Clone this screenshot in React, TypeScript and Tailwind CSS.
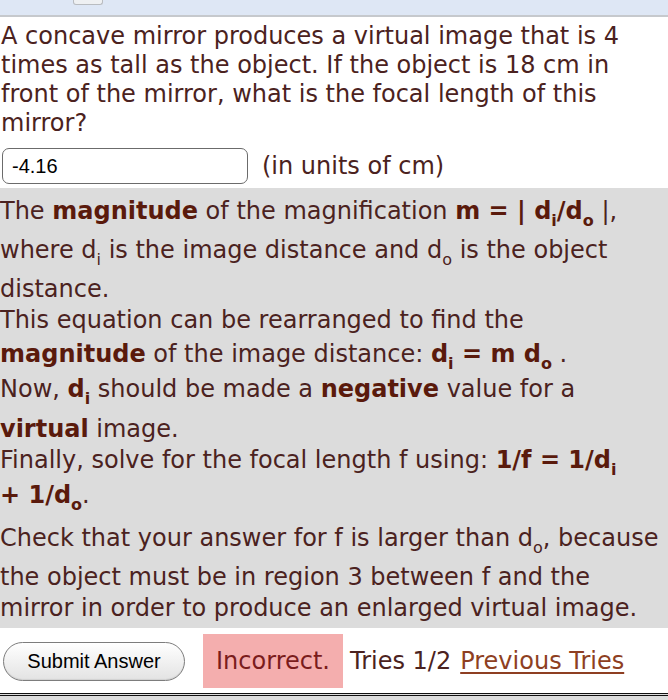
import React from "react";

const font = { fontFamily: '"DejaVu Sans", Verdana, sans-serif' };

function Sub({ children }: { children: React.ReactNode }) {
  return <span className="relative top-[7px] text-[16px] leading-none">{children}</span>;
}

function B({ children }: { children: React.ReactNode }) {
  return <b className="font-bold text-[#5a1a0c]">{children}</b>;
}

const lines: { mt: string; body: React.ReactNode }[] = [
  {
    mt: "mt-0",
    body: (
      <>
        The <B>magnitude</B> of the magnification <B>m = | d<Sub>i</Sub>/d<Sub>o</Sub></B> |,
      </>
    ),
  },
  {
    mt: "mt-[8px]",
    body: (
      <>
        where d<Sub>i</Sub> is the image distance and d<Sub>o</Sub> is the object
      </>
    ),
  },
  { mt: "mt-[8px]", body: <>distance.</> },
  { mt: "mt-0", body: <>This equation can be rearranged to find the</> },
  {
    mt: "mt-[3px]",
    body: (
      <>
        <B>magnitude</B> of the image distance: <B>d<Sub>i</Sub> = m d<Sub>o</Sub></B> .
      </>
    ),
  },
  {
    mt: "mt-[4px]",
    body: (
      <>
        Now, <B>d<Sub>i</Sub></B> should be made a <B>negative</B> value for a
      </>
    ),
  },
  {
    mt: "mt-[9px]",
    body: (
      <>
        <B>virtual</B> image.
      </>
    ),
  },
  {
    mt: "mt-0",
    body: (
      <>
        Finally, solve for the focal length f using: <B>1/f = 1/d<Sub>i</Sub></B>
      </>
    ),
  },
  {
    mt: "mt-[4px]",
    body: (
      <>
        <B>+ 1/d<Sub>o</Sub></B>.
      </>
    ),
  },
  {
    mt: "mt-[12px]",
    body: (
      <>
        Check that your answer for f is larger than d<Sub>o</Sub>, because
      </>
    ),
  },
  { mt: "mt-[8px]", body: <>the object must be in region 3 between f and the</> },
  { mt: "mt-0", body: <>mirror in order to produce an enlarged virtual image.</> },
];

export default function App() {
  return (
    <div className="w-[668px] h-[700px] overflow-hidden bg-white text-[#4b2220]" style={font}>
      <div className="relative h-[17px] bg-[#dee7f5] border-b-2 border-[#c6c9cd]">
        <div className="absolute left-[73px] top-0 w-[30px] h-[5px] rounded-b-[3px] border border-t-0 border-[#b9bcc0] bg-[#eef0f2]" />
      </div>

      <div className="pt-[5px] pl-[1px] text-[24px] leading-[29px] whitespace-nowrap">
        <div>A concave mirror produces a virtual image that is 4</div>
        <div>times as tall as the object. If the object is 18 cm in</div>
        <div>front of the mirror, what is the focal length of this</div>
        <div>mirror?</div>
      </div>

      <div className="mt-[10px] flex items-center">
        <div
          className="ml-[2px] w-[246px] h-[36px] rounded-[7px] border border-[#6b6b6b] bg-white flex items-center pl-[9px] text-[20px] text-black"
          style={{ fontFamily: '"Liberation Sans", Arial, sans-serif' }}
        >
          -4.16
        </div>
        <span className="ml-[14px] text-[24px] leading-[29px]">(in units of cm)</span>
      </div>

      <div className="mt-[4px] bg-[#dcdcdc] pt-[8px] pb-[4px] text-[24px] whitespace-nowrap">
        {lines.map((l, i) => (
          <div key={i} className={`${l.mt} h-[31px] leading-[31px]`}>
            {l.body}
          </div>
        ))}
      </div>

      <div className="flex items-center h-[65px] pt-[1px]">
        <button
          className="ml-[3px] w-[182px] h-[39px] rounded-full border border-[#7d7d7d] bg-gradient-to-b from-white to-[#e3e3e3] text-[20px] text-black shadow-[inset_0_-1px_1px_rgba(0,0,0,0.08)]"
          style={{ fontFamily: '"Liberation Sans", Arial, sans-serif' }}
        >
          Submit Answer
        </button>
        <div className="ml-[18px] h-[54px] w-[140px] bg-[#f4aeae] flex items-center justify-center text-[24px] text-[#7a1c1c]">
          Incorrect.
        </div>
        <span className="ml-[7px] text-[24px]">Tries 1/2</span>
        <a href="#" className="ml-[9px] text-[24px] text-[#8e3f22] underline underline-offset-[3px]">
          Previous Tries
        </a>
      </div>

      <div className="border-t-[3px] border-[#111] border-double h-[10px] bg-[#dcdcdc]" />
    </div>
  );
}
